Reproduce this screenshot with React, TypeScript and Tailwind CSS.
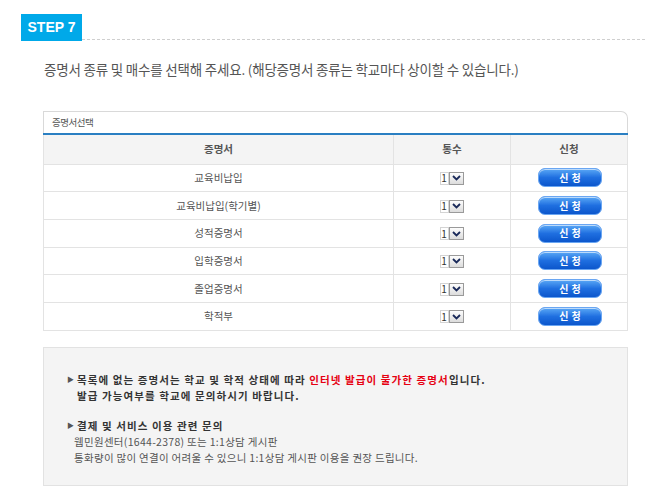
const certificates = ['교육비납입', '교육비납입(학기별)', '성적증명서', '입학증명서', '졸업증명서', '학적부'];

function CountSelect() {
  return (
    <div className="inline-flex h-[13px] items-stretch">
      <span className="flex w-[9px] items-center justify-center border border-[#d4d4d4] bg-white text-[10px] leading-none text-[#333]">1</span>
      <span className="flex w-[15px] items-center justify-center border border-[#9a9a9a] bg-gradient-to-b from-[#fdfdfd] to-[#dcdcdc]">
        <svg width="9" height="6" viewBox="0 0 9 6">
          <path d="M1 1 L4.5 4.5 L8 1" fill="none" stroke="#1a2a5a" strokeWidth="1.8" />
        </svg>
      </span>
    </div>
  );
}

function ApplyButton() {
  return (
    <button className="relative flex h-[19px] w-[64px] items-center justify-center overflow-hidden rounded-[7px] border border-[#6aa6f2] bg-gradient-to-b from-[#5aa8f6] via-[#1f6fe0] to-[#0b56cc] text-[10px] font-bold leading-none tracking-[3px] text-white shadow-[inset_0_1px_0_rgba(255,255,255,0.6)]">
      <span className="pl-[3px]">신청</span>
    </button>
  );
}

export default function App() {
  return (
    <div className="h-[500px] w-[665px] bg-white font-['Noto_Sans_CJK_KR','Noto_Sans',sans-serif] text-[#555]">
      {/* Step title */}
      <div className="flex items-end pl-[21px] pr-[20px] pt-[14px]">
        <div className="flex h-[27px] w-[61px] items-center justify-center bg-[#00a9e9] font-['Liberation_Sans',sans-serif] text-[14px] font-bold text-white">
          STEP 7
        </div>
        <div className="mb-[1px] flex-1 border-b border-dashed border-[#cfcfcf]" />
      </div>

      <p className="ml-[44px] mt-[19px] text-[13.5px] leading-[18px] tracking-[-0.2px] text-[#555]">
        증명서 종류 및 매수를 선택해 주세요. (해당증명서 종류는 학교마다 상이할 수 있습니다.)
      </p>

      {/* Certificate table */}
      <div className="ml-[43px] mt-[33px] w-[585px]">
        <div className="flex h-[22px] items-center rounded-tr-[7px] border border-b-0 border-[#d9d9d9] bg-white pl-[8px] text-[9.5px] tracking-[-0.5px] text-[#555]">
          증명서선택
        </div>
        <div className="h-[2px] bg-[#2a7fc2]" />
        <table className="w-full border-collapse border-x border-b border-[#e3e3e3] text-[10.5px] text-[#555]">
          <thead>
            <tr className="h-[29px] bg-[#f4f4f4]">
              <th className="w-[350px] border-b border-r border-[#e3e3e3] font-bold">증명서</th>
              <th className="w-[117px] border-b border-r border-[#e3e3e3] font-bold">통수</th>
              <th className="border-b border-[#e3e3e3] font-bold">신청</th>
            </tr>
          </thead>
          <tbody>
            {certificates.map((name, i) => (
              <tr key={name} className="h-[27.7px]">
                <td className={`border-r border-[#e3e3e3] text-center ${i < certificates.length - 1 ? 'border-b' : ''}`}>{name}</td>
                <td className={`border-r border-[#e3e3e3] ${i < certificates.length - 1 ? 'border-b' : ''}`}>
                  <div className="flex justify-center pr-[1px] pt-[1px]">
                    <CountSelect />
                  </div>
                </td>
                <td className={`border-[#e3e3e3] ${i < certificates.length - 1 ? 'border-b' : ''}`}>
                  <div className="flex justify-center pl-[2px]">
                    <ApplyButton />
                  </div>
                </td>
              </tr>
            ))}
          </tbody>
        </table>
      </div>

      {/* Notice box */}
      <div className="ml-[43px] mt-[16px] h-[139px] w-[585px] border border-[#e2e2e2] bg-[#f4f4f4] pl-[23px] pt-[24px] text-[10.5px]">
        <div className="flex items-start">
          <span className="mr-[3px] mt-[4px] text-[7px] leading-none text-[#555]">▶</span>
          <div className="font-bold leading-[16px] tracking-[1.1px] text-[#333]">
            <p>
              목록에 없는 증명서는 학교 및 학적 상태에 따라{' '}
              <span className="text-[#e60012]">인터넷 발급이 불가한 증명서</span>입니다.
            </p>
            <p>발급 가능여부를 학교에 문의하시기 바랍니다.</p>
          </div>
        </div>
        <div className="mt-[14px] flex items-start">
          <span className="mr-[3px] mt-[4px] text-[7px] leading-none text-[#555]">▶</span>
          <p className="font-bold leading-[16px] tracking-[1.1px] text-[#333]">결제 및 서비스 이용 관련 문의</p>
        </div>
        <div className="pl-[7px] leading-[16px] tracking-[0.3px] text-[#555]">
          <p>웹민원센터(1644-2378) 또는 1:1상담 게시판</p>
          <p>통화량이 많이 연결이 어려울 수 있으니 1:1상담 게시판 이용을 권장 드립니다.</p>
        </div>
      </div>
    </div>
  );
}
